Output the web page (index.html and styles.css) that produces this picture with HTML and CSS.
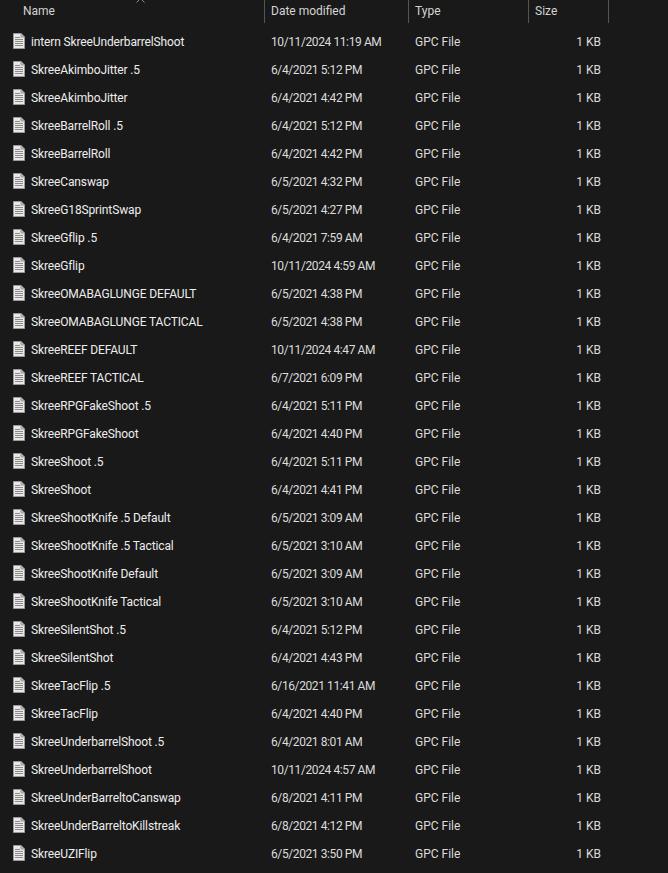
FILE: index.html
```html
<!DOCTYPE html>
<html lang="en">
<head>
<meta charset="utf-8">
<title>Files</title>
<link rel="stylesheet" href="styles.css">
</head>
<body>
<div class="explorer">
  <svg class="sort" width="9" height="5" viewBox="0 0 9 5"><path d="M0.5 4.5L4.5 0.5L8.5 4.5" fill="none" stroke="#8a8a8a"/></svg>
  <div class="cols head">
    <div class="h name">Name</div>
    <div class="h">Date modified</div>
    <div class="h">Type</div>
    <div class="h">Size</div>
  </div>
  <div class="rows" id="rows"></div>
</div>
<svg width="0" height="0" class="defs"><defs>
  <symbol id="doc" viewBox="0 0 12 16">
    <path d="M0.5 0.5H8L11.5 4V15.5H0.5Z" fill="#e8e8e8" stroke="#9a9a9a"/>
    <path d="M8 0.5V4H11.5" fill="#bdbdbd" stroke="#9a9a9a"/>
    <path d="M2 4.5H7M2 6.5H10M2 8.5H10M2 10.5H10M2 12.5H10" stroke="#8c8c8c" fill="none"/>
  </symbol>
</defs></svg>
<script src="app.js"></script>
</body>
</html>
```
FILE: styles.css
```css
html, body { margin: 0; padding: 0; background: #191919; }
body { font-family: Roboto, "Open Sans", sans-serif; font-size: 12px; color: #dcdcdc; overflow: hidden; }
.explorer { position: relative; width: 668px; height: 873px; }
.defs { position: absolute; }
.sort { position: absolute; left: 136px; top: -2px; }
.cols { display: grid; grid-template-columns: 265px 144px 120px 80px; }
.head { height: 23px; align-items: stretch; }
.h { padding-left: 6px; line-height: 22px; color: #d4d4d4; border-right: 1px solid #555; box-sizing: border-box; }
.h.name { padding-left: 23px; }
.rows { padding-top: 5px; }
.row { height: 28px; align-items: center; line-height: 28px; white-space: nowrap; }
.file { display: flex; align-items: center; gap: 6px; padding-left: 13px; color: #ededed; letter-spacing: -0.13px; }
.file svg { width: 12px; height: 16px; flex: none; margin-top: -2px; }
.date { padding-left: 6px; letter-spacing: -0.4px; }
.type { padding-left: 6px; }
.size { text-align: right; padding-right: 8px; }
```
FILE: app.js
```js
var files = [
["intern SkreeUnderbarrelShoot","10/11/2024 11:19 AM"],
["SkreeAkimboJitter .5","6/4/2021 5:12 PM"],
["SkreeAkimboJitter","6/4/2021 4:42 PM"],
["SkreeBarrelRoll .5","6/4/2021 5:12 PM"],
["SkreeBarrelRoll","6/4/2021 4:42 PM"],
["SkreeCanswap","6/5/2021 4:32 PM"],
["SkreeG18SprintSwap","6/5/2021 4:27 PM"],
["SkreeGflip .5","6/4/2021 7:59 AM"],
["SkreeGflip","10/11/2024 4:59 AM"],
["SkreeOMABAGLUNGE DEFAULT","6/5/2021 4:38 PM"],
["SkreeOMABAGLUNGE TACTICAL","6/5/2021 4:38 PM"],
["SkreeREEF DEFAULT","10/11/2024 4:47 AM"],
["SkreeREEF TACTICAL","6/7/2021 6:09 PM"],
["SkreeRPGFakeShoot .5","6/4/2021 5:11 PM"],
["SkreeRPGFakeShoot","6/4/2021 4:40 PM"],
["SkreeShoot .5","6/4/2021 5:11 PM"],
["SkreeShoot","6/4/2021 4:41 PM"],
["SkreeShootKnife .5 Default","6/5/2021 3:09 AM"],
["SkreeShootKnife .5 Tactical","6/5/2021 3:10 AM"],
["SkreeShootKnife Default","6/5/2021 3:09 AM"],
["SkreeShootKnife Tactical","6/5/2021 3:10 AM"],
["SkreeSilentShot .5","6/4/2021 5:12 PM"],
["SkreeSilentShot","6/4/2021 4:43 PM"],
["SkreeTacFlip .5","6/16/2021 11:41 AM"],
["SkreeTacFlip","6/4/2021 4:40 PM"],
["SkreeUnderbarrelShoot .5","6/4/2021 8:01 AM"],
["SkreeUnderbarrelShoot","10/11/2024 4:57 AM"],
["SkreeUnderBarreltoCanswap","6/8/2021 4:11 PM"],
["SkreeUnderBarreltoKillstreak","6/8/2021 4:12 PM"],
["SkreeUZIFlip","6/5/2021 3:50 PM"]
];
var host = document.getElementById("rows");
host.innerHTML = files.map(function (f) {
  return '<div class="cols row"><div class="file"><svg><use href="#doc"/></svg><span>' + f[0] +
    '</span></div><div class="date">' + f[1] +
    '</div><div class="type">GPC File</div><div class="size">1 KB</div></div>';
}).join("");
```
